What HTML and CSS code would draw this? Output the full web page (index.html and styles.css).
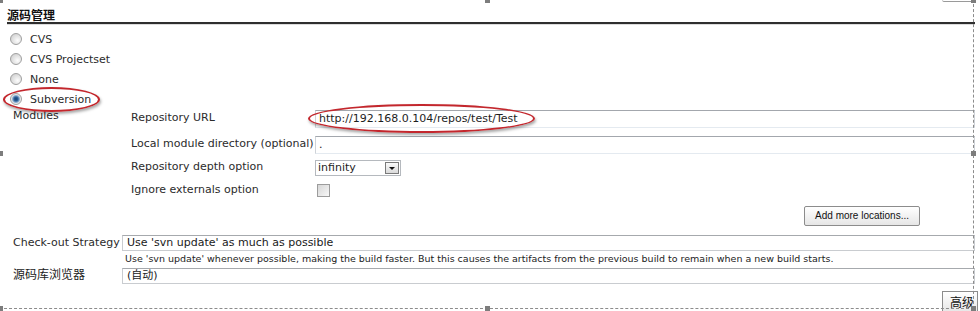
FILE: index.html
```html
<!DOCTYPE html>
<html>
<head>
<meta charset="utf-8">
<link rel="stylesheet" href="styles.css">
</head>
<body>
<div class="page">
  <div class="prevbtn"></div>
  <h2 class="heading">源码管理</h2>
  <div class="radios">
    <div class="ropt"><span class="radio"></span><span>CVS</span></div>
    <div class="ropt"><span class="radio"></span><span>CVS Projectset</span></div>
    <div class="ropt"><span class="radio"></span><span>None</span></div>
    <div class="ropt"><span class="radio checked"></span><span>Subversion</span></div>
  </div>
  <div class="modules">
    <div class="modlabel">Modules</div>
    <div class="modbody">
      <div class="mrow rowa"><div class="mlabel">Repository URL</div><div class="input">http://192.168.0.104/repos/test/Test</div></div>
      <div class="mrow rowb"><div class="mlabel">Local module directory (optional)</div><div class="input">.</div></div>
      <div class="mrow rowc"><div class="mlabel">Repository depth option</div><div class="sel"><span class="seltext">infinity</span><span class="selbtn"><span class="tri"></span></span></div></div>
      <div class="mrow rowd"><div class="mlabel">Ignore externals option</div><span class="cb"></span></div>
      <div class="addrow"><button class="btn">Add more locations...</button></div>
    </div>
  </div>
  <div class="frow checkout">
    <div class="flabel">Check-out Strategy</div>
    <div class="fcontrol">
      <div class="selectbox">Use 'svn update' as much as possible</div>
      <div class="desc">Use 'svn update' whenever possible, making the build faster. But this causes the artifacts from the previous build to remain when a new build starts.</div>
    </div>
  </div>
  <div class="frow browser">
    <div class="flabel cjk">源码库浏览器</div>
    <div class="fcontrol"><div class="selectbox">(自动)</div></div>
  </div>
  <div class="advrow"><button class="btn cjkbtn">高级</button></div>

  <div class="ellipse ell1"></div>
  <div class="ellipse ell2"></div>
  <div class="frame"></div>
  <span class="handle h-tl"></span>
  <span class="handle h-tm"></span>
  <span class="handle h-tr"></span>
  <span class="handle h-ml"></span>
  <span class="handle h-mr"></span>
  <span class="handle h-bl"></span>
  <span class="handle h-bm"></span>
  <span class="handle h-br"></span>
</div>
</body>
</html>
```
FILE: styles.css
```css
body {
  margin: 0;
  font-family: "DejaVu Sans", Verdana, sans-serif;
  font-size: 11px;
  color: #2b2b2b;
  background: #fff;
  overflow: hidden;
}
.page {
  position: relative;
  width: 980px;
  height: 311px;
  overflow: hidden;
}
.prevbtn {
  margin-left: 942px;
  width: 30px;
  height: 1px;
  border-bottom: 1px solid #9a9a9a;
  border-left: 1px solid #c8c8c8;
  border-bottom-left-radius: 2px;
}
.heading {
  margin: 6px 0 0 7px;
  width: 968px;
  font: bold 12px/14px "Noto Sans CJK SC", sans-serif;
  color: #111;
  border-bottom: 2px solid #2e2e2e;
  box-shadow: 0 1px 0 #dcdcdc;
}
.radios {
  margin-top: 5px;
  padding-left: 10px;
}
.ropt {
  height: 20px;
  display: flex;
  align-items: center;
}
.radio {
  width: 10px;
  height: 10px;
  border: 1px solid #a0a0a0;
  border-radius: 50%;
  margin-right: 8px;
  background: radial-gradient(circle at 65% 65%, #fdfdfd 0, #e4e4e4 45%, #c8c8c8 100%);
}
.radio.checked {
  background: radial-gradient(circle at 50% 50%, #163e6e 0, #2a5f98 2px, #8fb0d2 3.5px, #e8e8e8 4.5px, #d0d0d0 100%);
}
.modules {
  display: flex;
  padding-left: 13px;
  width: 975px;
  box-sizing: border-box;
}
.modlabel {
  width: 118px;
  line-height: 13px;
}
.modbody {
  flex: 1;
  padding-top: 1px;
}
.mrow {
  display: flex;
  align-items: center;
}
.mlabel {
  width: 184px;
  line-height: 13px;
  padding-bottom: 3px;
  white-space: nowrap;
}
.rowa { height: 18px; }
.rowb { height: 18px; margin-top: 8px; }
.rowc { height: 16px; margin-top: 6px; }
.rowd { height: 13px; margin-top: 8px; }
.input {
  flex: 1;
  height: 18px;
  box-sizing: border-box;
  border: 1px solid #cfd3d8;
  border-top-color: #a3a7ad;
  border-bottom-color: #e4eaf0;
  padding: 0 3px;
  line-height: 16px;
  color: #1e1e1e;
}
.sel {
  width: 86px;
  height: 16px;
  box-sizing: border-box;
  border: 1px solid #b5b9be;
  display: flex;
  align-items: center;
}
.seltext {
  flex: 1;
  padding-left: 2px;
  color: #1e1e1e;
  line-height: 14px;
}
.selbtn {
  width: 14px;
  height: 12px;
  margin-right: 1px;
  border: 1px solid #7a7a7a;
  box-sizing: border-box;
  background: linear-gradient(#fafafa, #dadada);
  display: flex;
  align-items: center;
  justify-content: center;
}
.tri {
  width: 0;
  height: 0;
  border-left: 3px solid transparent;
  border-right: 3px solid transparent;
  border-top: 3px solid #111;
}
.cb {
  width: 11px;
  height: 11px;
  margin-left: 2px;
  border: 1px solid #9c9c9c;
  background: linear-gradient(135deg, #d6d6d6, #f8f8f8);
}
.addrow {
  margin-top: 9px;
  display: flex;
  justify-content: flex-end;
  padding-right: 55px;
}
.btn {
  height: 20px;
  padding: 0 10px;
  border: 1px solid #8c8c8c;
  border-radius: 2px;
  background: linear-gradient(#ffffff, #e6e6e6);
  font: 10px/18px "Liberation Sans", Arial, sans-serif;
  color: #111;
  box-sizing: border-box;
}
.frow {
  display: flex;
  padding-left: 13px;
  width: 975px;
  box-sizing: border-box;
}
.flabel {
  width: 109px;
  line-height: 16px;
  white-space: nowrap;
}
.fcontrol {
  flex: 1;
}
.checkout { margin-top: 9px; }
.selectbox {
  height: 16px;
  box-sizing: border-box;
  border: 1px solid #c9ccd0;
  border-top-color: #a6a9ad;
  padding-left: 4px;
  line-height: 14px;
  color: #1a1a1a;
}
.desc {
  margin-top: 2px;
  padding-left: 3px;
  font-size: 9.5px;
  line-height: 12px;
  color: #222;
  white-space: nowrap;
}
.browser { margin-top: 3px; }
.browser .selectbox {
  font-family: "DejaVu Sans", "Noto Sans CJK SC", sans-serif;
}
.cjk {
  font-family: "Noto Sans CJK SC", sans-serif;
  font-size: 12px;
  line-height: 12px;
  color: #222;
}
.advrow {
  margin-top: 7px;
  display: flex;
  justify-content: flex-end;
  padding-right: 2px;
}
.cjkbtn {
  width: 36px;
  height: 22px;
  padding: 0 0 0 7px;
  text-align: left;
  font: 12px/20px "Noto Sans CJK SC", sans-serif;
  border-radius: 0;
}
.ellipse {
  position: absolute;
  border: 2px solid #c3272d;
  border-radius: 50%;
  box-shadow: 1px 2px 3px rgba(0, 0, 0, 0.35);
}
.ell1 {
  left: 3px;
  top: 87px;
  width: 93px;
  height: 21px;
}
.ell2 {
  left: 308px;
  top: 104px;
  width: 223px;
  height: 25px;
}
.frame {
  position: absolute;
  left: -1px;
  top: -1px;
  width: 974px;
  height: 309px;
  border-right: 1px dashed #8c8c8c;
  border-bottom: 1px dashed #8c8c8c;
}
.handle {
  position: absolute;
  width: 5px;
  height: 5px;
  background: #7d7d7d;
}
.h-tl { left: -2px; top: -2px; }
.h-tm { left: 485px; top: -2px; }
.h-tr { left: 971px; top: -2px; }
.h-ml { left: -2px; top: 151px; }
.h-mr { left: 971px; top: 151px; }
.h-bl { left: -2px; top: 306px; }
.h-bm { left: 485px; top: 306px; }
.h-br { left: 971px; top: 306px; }
```
